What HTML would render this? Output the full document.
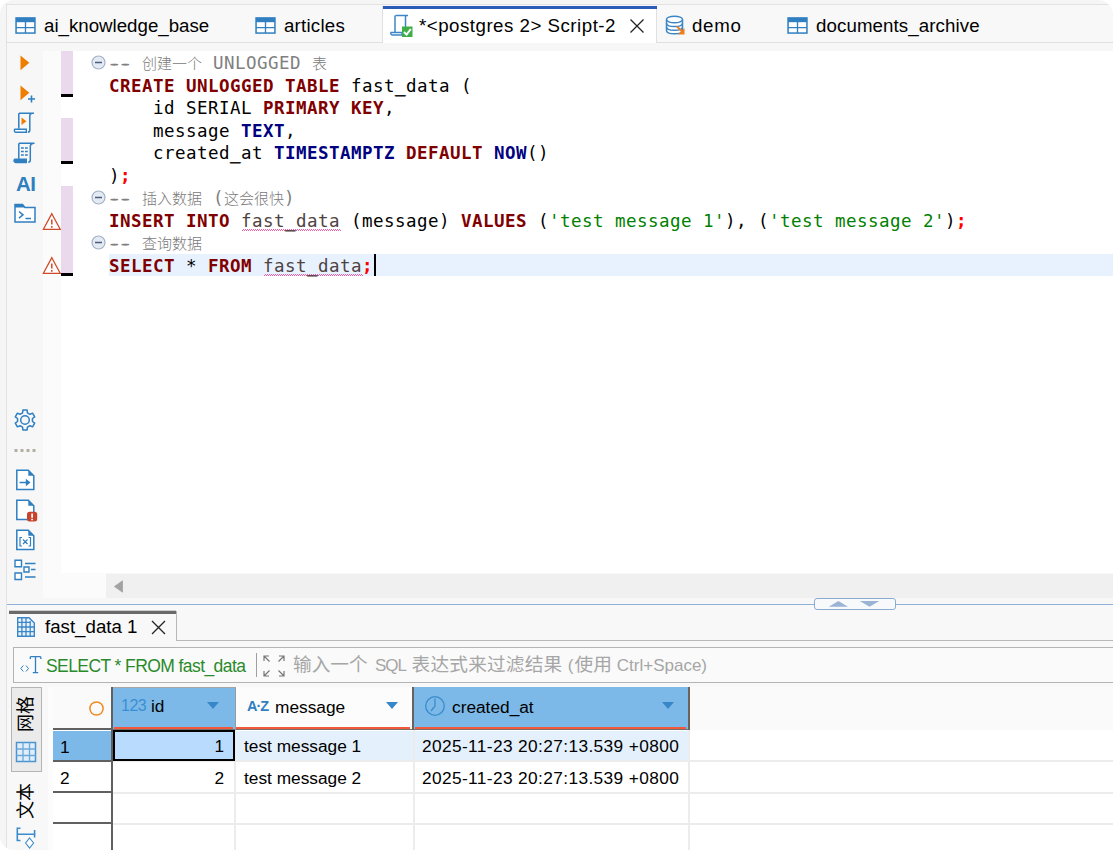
<!DOCTYPE html>
<html lang="zh">
<head>
<meta charset="utf-8">
<title>DBeaver - Script-2</title>
<style>
*{box-sizing:border-box;margin:0;padding:0}
html,body{width:1113px;height:850px;overflow:hidden;background:#fff}
body{position:relative;font-family:"Liberation Sans","Noto Sans CJK SC",sans-serif;color:#000}
.abs{position:absolute}
#frame{position:absolute;left:0;top:0;width:1113px;height:850px;background:#f5f5f5;border-radius:14px 15px 0 14px;overflow:hidden}
#win{position:absolute;left:6px;top:4px;width:1120px;height:860px;background:#f8f8f8;border-left:1px solid #e2e2e2;border-top:1px solid #e2e2e2}
/* tabs */
.tab{position:absolute;top:0;height:37px;font-size:18.7px;line-height:37px;white-space:nowrap;color:#000}
.tab .lbl{position:absolute;top:1px}
#tabline{position:absolute;left:7px;top:42px;width:1106px;height:1px;background:#e0e0e0}
#acttab{position:absolute;left:382px;top:6px;width:275px;height:37px;background:#fff;border-left:1px solid #e0e0e0;border-right:1px solid #e0e0e0}
#acttab:before{content:"";position:absolute;left:0;top:0;width:274px;height:3px;background:#2c5bb8}
/* editor */
#edwrap{position:absolute;left:7px;top:43px;width:1106px;height:561px;background:#f7f7f7}
#editor{position:absolute;left:61px;top:51px;width:1052px;height:522px;background:#fff}
#ruler{position:absolute;left:43px;top:51px;width:63px;height:547px;background:#fbfbfb}
.chg{position:absolute;left:61px;width:12px;background:#ead9ec}
.chgb{position:absolute;left:61px;width:12px;height:3px;background:#000}
#curline{position:absolute;left:109px;top:254px;width:1004px;height:22px;background:#e8f2fe}
.code{position:absolute;left:109px;height:22.5px;line-height:22.5px;font-family:"DejaVu Sans Mono","Liberation Mono","Noto Sans CJK SC",monospace;font-size:17.5px;letter-spacing:0.464px;white-space:pre;color:#000}
.k{color:#800000;font-weight:bold}
.t{color:#000080;font-weight:bold}
.s{color:#008000}
.sc{color:#ff0000;font-weight:bold}
.c{color:#808080}
.cj{font-family:"Liberation Sans","Noto Sans CJK SC",sans-serif;font-size:15px;letter-spacing:0;color:#7a7a7a;font-weight:300}
.id{color:#4f4242}
.us{text-shadow:0 1px 0 currentColor,0.5px 0 0 currentColor,-0.5px 0 0 currentColor}
.dsh{text-shadow:1.5px 0 0 currentColor,-1.5px 0 0 currentColor}
#hscroll{position:absolute;left:106px;top:574px;width:1007px;height:24px;background:#f0f0f0}
/* bottom */
#sash{position:absolute;left:7px;top:604px;width:1106px;height:1px;background:#8fb0d8}

#sashh{position:absolute;left:814px;top:598px;width:82px;height:12px;border:1px solid #8cabd2;border-radius:3px;background:#f8f9fa}
#rtab{position:absolute;left:9px;top:611px;width:168px;height:30px;background:#f8f8f8;border-right:1px solid #b8b8b8}
#rtab:before{content:"";position:absolute;left:0;top:0;width:167px;height:3px;background:#6a6a6a;box-shadow:0 -1px 0 #cfcfcf}
#rtabline{position:absolute;left:176px;top:640px;width:940px;height:1px;background:#b8b8b8}
#rtabtxt{position:absolute;left:45px;top:615px;font-size:18.700px;line-height:24px;white-space:nowrap}
#filter{position:absolute;left:13px;top:647px;width:1110px;height:36px;border:1px solid #b4b4b4;background:#fafafa}
#ftxt{position:absolute;left:46px;top:654px;font-size:17.500px;letter-spacing:-0.580px;line-height:24px;color:#2a8a2a;white-space:nowrap}
#fph{position:absolute;left:293px;top:651px;font-size:18.670px;line-height:28px;color:#a6a6a6;white-space:nowrap}
.fs{display:inline-block;vertical-align:baseline;white-space:nowrap}
.fl{font-size:17px}
#fsep{position:absolute;left:256px;top:653px;width:1px;height:24px;background:#a0a0a0}
#vtab1{position:absolute;left:11px;top:687px;width:31px;height:85px;background:#ebebeb;border:1px solid #b5b5b5}
.vtxt{position:absolute;font-size:18px;line-height:20px;white-space:nowrap;transform-origin:0 0;transform:rotate(-90deg);font-family:"Liberation Sans","Noto Sans CJK SC",sans-serif}
#grid{position:absolute;left:53px;top:687px;width:1060px;height:170px;background:#fff}
#ghead{position:absolute;left:53px;top:687px;width:1060px;height:43px;background:#fafafa}
.gh{position:absolute;top:687px;height:43px;font-size:17.300px;line-height:24px;white-space:nowrap}
.gh.sel{background:#7db9e8}
.gh .red{position:absolute;left:1px;right:2px;bottom:1px;height:2px;background:#f4583a}
.gh:after{content:"";position:absolute;left:0;right:0;bottom:0;height:1px;background:#77706a}
.gh .nm{position:absolute;top:8px}
.gh .tri{position:absolute;top:15px;width:0;height:0;border-left:6.5px solid transparent;border-right:6.5px solid transparent;border-top:7px solid #3787c8}
.hl{position:absolute;left:113px;height:2px;width:1000px;background:#ececec}
.vl{position:absolute;top:730px;width:2px;height:120px;background:#ececec}
.rhl{position:absolute;left:53px;width:59px;height:2px;background:#606060}
.cell{position:absolute;font-size:17.300px;line-height:24px;white-space:nowrap}
</style>
</head>
<body>
<div id="frame">
<div id="win"></div>

<!-- TAB BAR -->
<div id="tabline"></div>
<div id="acttab"></div>
<div id="tabs">
<svg class="abs" style="left:15px;top:17px" width="21" height="17" viewBox="0 0 22 18"><rect x="1" y="1" width="20" height="16" fill="#fff" stroke="#2f7fc1" stroke-width="1.6"/><rect x="1" y="1" width="20" height="4.5" fill="#2f7fc1"/><path d="M11 5v12M1 11.300h20" stroke="#2f7fc1" stroke-width="1.400" fill="none"/></svg>
<div class="tab" style="left:44px;top:6px"><span class="lbl" id="t1">ai_knowledge_base</span></div>
<svg class="abs" style="left:255px;top:17px" width="21" height="17" viewBox="0 0 22 18"><rect x="1" y="1" width="20" height="16" fill="#fff" stroke="#2f7fc1" stroke-width="1.6"/><rect x="1" y="1" width="20" height="4.5" fill="#2f7fc1"/><path d="M11 5v12M1 11.300h20" stroke="#2f7fc1" stroke-width="1.400" fill="none"/></svg>
<div class="tab" style="left:284px;top:6px"><span class="lbl" id="t2" style="letter-spacing:0.22px">articles</span></div>
<svg class="abs" style="left:389px;top:13px" width="26" height="26" viewBox="0 0 26 26"><path d="M6.5 2.5h12.5M6 2.5v17M16.5 2.5v12" stroke="#3c86c6" stroke-width="1.5" fill="none"/><path d="M2 19.5h11v2.5h-9.5a1.6 1.6 0 0 1-1.5-2.5z" fill="#fff" stroke="#3c86c6" stroke-width="1.4"/><rect x="13" y="13.500" width="10.500" height="10.500" fill="#3fae49"/><path d="M15 19l2.600 2.600 4.200-5.600" stroke="#fff" stroke-width="2" fill="none"/></svg>
<div class="tab" style="left:419px;top:6px"><span class="lbl" id="t3" style="letter-spacing:0.5px">*&lt;postgres 2&gt; Script-2</span></div>
<svg class="abs" style="left:629px;top:18px" width="16" height="16" viewBox="0 0 16 16"><path d="M1.500 1.500l13 13M14.500 1.500l-13 13" stroke="#222" stroke-width="1.300" fill="none"/></svg>
<svg class="abs" style="left:664px;top:14px" width="24" height="22" viewBox="0 0 24 22"><path d="M2.500 5.500v11c0 2 3.600 3.300 8 3.300s8-1.300 8-3.300v-11" fill="#fff" stroke="#3c86c6" stroke-width="1.500"/><ellipse cx="10.500" cy="5.500" rx="8" ry="3.300" fill="#fff" stroke="#3c86c6" stroke-width="1.500"/><path d="M2.500 9.200c0 2 3.600 3.300 8 3.300s8-1.300 8-3.300M2.500 13c0 2 3.600 3.300 8 3.300s8-1.300 8-3.300" fill="none" stroke="#3c86c6" stroke-width="1.500"/><path d="M13 12.500l5.500 5.500" stroke="#ef7d1a" stroke-width="1.800"/><path d="M20.500 14v6.500h-6.500z" fill="#ef7d1a"/></svg>
<div class="tab" style="left:692px;top:6px"><span class="lbl" id="t4" style="letter-spacing:0.7px">demo</span></div>
<svg class="abs" style="left:787px;top:17px" width="21" height="17" viewBox="0 0 22 18"><rect x="1" y="1" width="20" height="16" fill="#fff" stroke="#2f7fc1" stroke-width="1.6"/><rect x="1" y="1" width="20" height="4.5" fill="#2f7fc1"/><path d="M11 5v12M1 11.300h20" stroke="#2f7fc1" stroke-width="1.400" fill="none"/></svg>
<div class="tab" style="left:816px;top:6px"><span class="lbl" id="t5" style="letter-spacing:0.1px">documents_archive</span></div>
</div>

<!-- EDITOR -->
<div id="edwrap"></div>
<div id="ruler"></div>
<div id="editor"></div>
<div id="gutter">
<div class="chg" style="top:51px;height:43px"></div><div class="chgb" style="top:94px"></div>
<div class="chg" style="top:118px;height:43px"></div><div class="chgb" style="top:161px"></div>
<div class="chg" style="top:186px;height:87px"></div><div class="chgb" style="top:273px"></div>
</div>
<div id="curline"></div>
<div id="squig">
<svg class="abs" style="left:242px;top:229px" width="99" height="2" viewBox="0 0 99 2" shape-rendering="crispEdges"><path d="M0 1h1v1h-1zM1 0h1v1h-1zM2 1h1v1h-1zM3 0h1v1h-1zM4 1h1v1h-1zM5 0h1v1h-1zM6 1h1v1h-1zM7 0h1v1h-1zM8 1h1v1h-1zM9 0h1v1h-1zM10 1h1v1h-1zM11 0h1v1h-1zM12 1h1v1h-1zM13 0h1v1h-1zM14 1h1v1h-1zM15 0h1v1h-1zM16 1h1v1h-1zM17 0h1v1h-1zM18 1h1v1h-1zM19 0h1v1h-1zM20 1h1v1h-1zM21 0h1v1h-1zM22 1h1v1h-1zM23 0h1v1h-1zM24 1h1v1h-1zM25 0h1v1h-1zM26 1h1v1h-1zM27 0h1v1h-1zM28 1h1v1h-1zM29 0h1v1h-1zM30 1h1v1h-1zM31 0h1v1h-1zM32 1h1v1h-1zM33 0h1v1h-1zM34 1h1v1h-1zM35 0h1v1h-1zM36 1h1v1h-1zM37 0h1v1h-1zM38 1h1v1h-1zM39 0h1v1h-1zM40 1h1v1h-1zM41 0h1v1h-1zM42 1h1v1h-1zM43 0h1v1h-1zM44 1h1v1h-1zM45 0h1v1h-1zM46 1h1v1h-1zM47 0h1v1h-1zM48 1h1v1h-1zM49 0h1v1h-1zM50 1h1v1h-1zM51 0h1v1h-1zM52 1h1v1h-1zM53 0h1v1h-1zM54 1h1v1h-1zM55 0h1v1h-1zM56 1h1v1h-1zM57 0h1v1h-1zM58 1h1v1h-1zM59 0h1v1h-1zM60 1h1v1h-1zM61 0h1v1h-1zM62 1h1v1h-1zM63 0h1v1h-1zM64 1h1v1h-1zM65 0h1v1h-1zM66 1h1v1h-1zM67 0h1v1h-1zM68 1h1v1h-1zM69 0h1v1h-1zM70 1h1v1h-1zM71 0h1v1h-1zM72 1h1v1h-1zM73 0h1v1h-1zM74 1h1v1h-1zM75 0h1v1h-1zM76 1h1v1h-1zM77 0h1v1h-1zM78 1h1v1h-1zM79 0h1v1h-1zM80 1h1v1h-1zM81 0h1v1h-1zM82 1h1v1h-1zM83 0h1v1h-1zM84 1h1v1h-1zM85 0h1v1h-1zM86 1h1v1h-1zM87 0h1v1h-1zM88 1h1v1h-1zM89 0h1v1h-1zM90 1h1v1h-1zM91 0h1v1h-1zM92 1h1v1h-1zM93 0h1v1h-1zM94 1h1v1h-1zM95 0h1v1h-1zM96 1h1v1h-1zM97 0h1v1h-1zM98 1h1v1h-1z" fill="#f25aa8"/></svg>
<svg class="abs" style="left:264px;top:274px" width="99" height="2" viewBox="0 0 99 2" shape-rendering="crispEdges"><path d="M0 1h1v1h-1zM1 0h1v1h-1zM2 1h1v1h-1zM3 0h1v1h-1zM4 1h1v1h-1zM5 0h1v1h-1zM6 1h1v1h-1zM7 0h1v1h-1zM8 1h1v1h-1zM9 0h1v1h-1zM10 1h1v1h-1zM11 0h1v1h-1zM12 1h1v1h-1zM13 0h1v1h-1zM14 1h1v1h-1zM15 0h1v1h-1zM16 1h1v1h-1zM17 0h1v1h-1zM18 1h1v1h-1zM19 0h1v1h-1zM20 1h1v1h-1zM21 0h1v1h-1zM22 1h1v1h-1zM23 0h1v1h-1zM24 1h1v1h-1zM25 0h1v1h-1zM26 1h1v1h-1zM27 0h1v1h-1zM28 1h1v1h-1zM29 0h1v1h-1zM30 1h1v1h-1zM31 0h1v1h-1zM32 1h1v1h-1zM33 0h1v1h-1zM34 1h1v1h-1zM35 0h1v1h-1zM36 1h1v1h-1zM37 0h1v1h-1zM38 1h1v1h-1zM39 0h1v1h-1zM40 1h1v1h-1zM41 0h1v1h-1zM42 1h1v1h-1zM43 0h1v1h-1zM44 1h1v1h-1zM45 0h1v1h-1zM46 1h1v1h-1zM47 0h1v1h-1zM48 1h1v1h-1zM49 0h1v1h-1zM50 1h1v1h-1zM51 0h1v1h-1zM52 1h1v1h-1zM53 0h1v1h-1zM54 1h1v1h-1zM55 0h1v1h-1zM56 1h1v1h-1zM57 0h1v1h-1zM58 1h1v1h-1zM59 0h1v1h-1zM60 1h1v1h-1zM61 0h1v1h-1zM62 1h1v1h-1zM63 0h1v1h-1zM64 1h1v1h-1zM65 0h1v1h-1zM66 1h1v1h-1zM67 0h1v1h-1zM68 1h1v1h-1zM69 0h1v1h-1zM70 1h1v1h-1zM71 0h1v1h-1zM72 1h1v1h-1zM73 0h1v1h-1zM74 1h1v1h-1zM75 0h1v1h-1zM76 1h1v1h-1zM77 0h1v1h-1zM78 1h1v1h-1zM79 0h1v1h-1zM80 1h1v1h-1zM81 0h1v1h-1zM82 1h1v1h-1zM83 0h1v1h-1zM84 1h1v1h-1zM85 0h1v1h-1zM86 1h1v1h-1zM87 0h1v1h-1zM88 1h1v1h-1zM89 0h1v1h-1zM90 1h1v1h-1zM91 0h1v1h-1zM92 1h1v1h-1zM93 0h1v1h-1zM94 1h1v1h-1zM95 0h1v1h-1zM96 1h1v1h-1zM97 0h1v1h-1zM98 1h1v1h-1z" fill="#f25aa8"/></svg>
</div>
<div id="codelines">
<div class="code" id="L0" style="top:52.0px"><span class="c"><span class="dsh">--</span> <span class="cj">创建一个</span> UNLOGGED <span class="cj">表</span></span></div>
<div class="code" id="L1" style="top:74.5px"><span class="k">CREATE UNLOGGED TABLE</span> fast<span class="us">_</span>data (</div>
<div class="code" id="L2" style="top:97.0px">    id SERIAL <span class="k">PRIMARY KEY</span>,</div>
<div class="code" id="L3" style="top:119.5px">    message <span class="t">TEXT</span>,</div>
<div class="code" id="L4" style="top:142.0px">    created<span class="us">_</span>at <span class="t">TIMESTAMPTZ</span> <span class="k">DEFAULT</span> <span class="t">NOW</span>()</div>
<div class="code" id="L5" style="top:164.5px">)<span class="sc">;</span></div>
<div class="code" id="L6" style="top:187.0px"><span class="c"><span class="dsh">--</span> <span class="cj">插入数据</span> (<span class="cj">这会很快</span>)</span></div>
<div class="code" id="L7" style="top:209.5px"><span class="k">INSERT INTO</span> <span class="id">fast<span class="us">_</span>data</span> (message) <span class="k">VALUES</span> (<span class="s">'test message 1'</span>), (<span class="s">'test message 2'</span>)<span class="sc">;</span></div>
<div class="code" id="L8" style="top:232.0px"><span class="c"><span class="dsh">--</span> <span class="cj">查询数据</span></span></div>
<div class="code" id="L9" style="top:254.5px"><span class="k">SELECT</span> * <span class="k">FROM</span> <span class="id">fast<span class="us">_</span>data</span><span class="sc">;</span></div>
</div>
<div id="hscroll"></div>
<div id="marks">
<svg class="abs" style="left:91px;top:54.8px" width="15" height="15" viewBox="0 0 15 15"><circle cx="7.500" cy="7.500" r="6.500" fill="#e3eaf3" stroke="#a3b1c7" stroke-width="1.200"/><path d="M4 7.500h7" stroke="#4b5c7c" stroke-width="1.600"/></svg>
<svg class="abs" style="left:91px;top:189.8px" width="15" height="15" viewBox="0 0 15 15"><circle cx="7.500" cy="7.500" r="6.500" fill="#e3eaf3" stroke="#a3b1c7" stroke-width="1.200"/><path d="M4 7.500h7" stroke="#4b5c7c" stroke-width="1.600"/></svg>
<svg class="abs" style="left:91px;top:234.7px" width="15" height="15" viewBox="0 0 15 15"><circle cx="7.500" cy="7.500" r="6.500" fill="#e3eaf3" stroke="#a3b1c7" stroke-width="1.200"/><path d="M4 7.500h7" stroke="#4b5c7c" stroke-width="1.600"/></svg>
<svg class="abs" style="left:42px;top:211.5px" width="20" height="19" viewBox="0 0 20 19"><path d="M9.800 1.700L18.200 17.300H1.400z" fill="#fff" stroke="#d04a27" stroke-width="1.300" stroke-linejoin="miter"/><path d="M9.800 7.500v5M9.800 14v1.800" stroke="#d04a27" stroke-width="1.500"/></svg>
<svg class="abs" style="left:42px;top:256.3px" width="20" height="19" viewBox="0 0 20 19"><path d="M9.800 1.700L18.200 17.300H1.400z" fill="#fff" stroke="#d04a27" stroke-width="1.300" stroke-linejoin="miter"/><path d="M9.800 7.500v5M9.800 14v1.800" stroke="#d04a27" stroke-width="1.500"/></svg>
<div class="abs" style="left:374px;top:254px;width:2px;height:22px;background:#000"></div>
<svg class="abs" style="left:114px;top:580px" width="10" height="13" viewBox="0 0 10 13"><path d="M8.500 0.800L0.500 6.500l8 5.700z" fill="#a3a3a3" stroke="#a3a3a3" stroke-width="0.800" stroke-linejoin="round"/></svg>
</div>

<!-- LEFT TOOLBAR -->
<div id="ltool">
<svg class="abs" style="left:20px;top:55px" width="10" height="16" viewBox="0 0 10 16"><path d="M0.500 0.500L9.300 7.800L0.500 15.200z" fill="#ef7d00"/></svg>
<svg class="abs" style="left:20px;top:85px" width="17" height="20" viewBox="0 0 17 20"><path d="M0.500 0.500L9.300 7.800L0.500 15.200z" fill="#ef7d00"/><path d="M11.500 10.500v7M8 14h7" stroke="#2f7fc1" stroke-width="1.600" fill="none"/></svg>
<svg class="abs" style="left:13px;top:111px" width="24" height="24" viewBox="0 0 24 24"><path d="M6 2.300h15M5.800 2.300v15.500M18.800 2.300c-1.500 0.300-2 1.500-2 3v13.500c0 1.500-0.800 2.500-2 2.500" stroke="#2f7fc1" stroke-width="1.500" fill="none"/><path d="M1.800 18.300h11.500v3h-10a1.800 1.800 0 0 1-1.500-3z" fill="#fff" stroke="#2f7fc1" stroke-width="1.400"/><path d="M8.500 6.500l5 3.800-5 3.800z" fill="#ef7d00"/></svg>
<svg class="abs" style="left:13px;top:141px" width="24" height="24" viewBox="0 0 24 24"><path d="M6 2.300h15.500M5.800 2.300v15.500M20.500 2.300c-2.500 0.300-3.200 1.500-3.200 3v13.500c0 1.500-0.800 2.500-2 2.500" stroke="#2f7fc1" stroke-width="1.500" fill="none"/><path d="M1.800 18.300h11.500v3.200h-10a1.800 1.800 0 0 1-1.500-3.200z" fill="#2f7fc1" stroke="#2f7fc1" stroke-width="1.400"/><path d="M8 7h2.800M12 7h2.800M8 10.500h2.800M12 10.500h2.800M8 14h2.800M12 14h2.800" stroke="#2f7fc1" stroke-width="1.500" fill="none"/></svg>
<div class="abs" id="ai" style="left:16px;top:173px;font-size:20.500px;line-height:22px;font-weight:bold;color:#2f7fc1;letter-spacing:-0.500px">AI</div>
<svg class="abs" style="left:13px;top:202px" width="24" height="22" viewBox="0 0 24 22"><path d="M2 2.500h7.500l2.500 3h10v14.500h-20z" fill="#fff" stroke="#2f7fc1" stroke-width="1.500"/><path d="M2 2.500h7.500l2.500 3h-10z" fill="#2f7fc1"/><path d="M6 9.500l4 3.300-4 3.300M12.500 16.500h5.500" stroke="#2f7fc1" stroke-width="1.500" fill="none"/></svg>
<svg class="abs" style="left:13px;top:408px" width="24" height="24" viewBox="0 0 24 24"><path d="M9.58 4.80 L9.88 2.02 L14.12 2.02 L14.42 4.80 L17.03 6.30 L19.58 5.17 L21.70 8.85 L19.45 10.50 L19.45 13.50 L21.70 15.15 L19.58 18.83 L17.03 17.70 L14.42 19.20 L14.12 21.98 L9.88 21.98 L9.58 19.20 L6.97 17.70 L4.42 18.83 L2.30 15.15 L4.55 13.50 L4.55 10.50 L2.30 8.85 L4.42 5.17 L6.97 6.30Z" fill="none" stroke="#2f7fc1" stroke-width="1.500" stroke-linejoin="round"/><circle cx="12" cy="12" r="4.300" fill="none" stroke="#2f7fc1" stroke-width="1.500"/></svg>
<svg class="abs" style="left:14px;top:449px" width="22" height="3" viewBox="0 0 22 3"><path d="M0.500 0h3v3h-3zM6.500 0h3v3h-3zM12.500 0h3v3h-3zM18.500 0h3v3h-3z" fill="#b3afa4"/></svg>
<svg class="abs" style="left:15px;top:468px" width="22" height="24" viewBox="0 0 22 24"><path d="M1.800 2.200h11.500l5.500 5.500v13.800h-17z" fill="#fff" stroke="#2f7fc1" stroke-width="1.500"/><path d="M13.300 2.200l5.500 5.500h-5.500z" fill="#2f7fc1"/><path d="M4.500 14.500h7" stroke="#2f7fc1" stroke-width="1.500" fill="none"/><path d="M10.800 10.800l4.700 3.700-4.700 3.700z" fill="#2f7fc1"/></svg>
<svg class="abs" style="left:15px;top:498px" width="24" height="25" viewBox="0 0 24 25"><path d="M1.800 2.200h11.500l5.500 5.500v13.800h-17z" fill="#fff" stroke="#2f7fc1" stroke-width="1.500"/><path d="M13.300 2.200l5.500 5.500h-5.500z" fill="#2f7fc1"/><rect x="12" y="13.800" width="10.200" height="9.800" rx="2.500" fill="#c8432b"/><path d="M17.100 15.500v4.300M17.100 20.800v1.500" stroke="#fff" stroke-width="1.700"/></svg>
<svg class="abs" style="left:15px;top:528px" width="22" height="24" viewBox="0 0 22 24"><path d="M1.800 2.200h11.500l5.500 5.500v13.800h-17z" fill="#fff" stroke="#2f7fc1" stroke-width="1.500"/><path d="M13.300 2.200l5.500 5.500h-5.500z" fill="#2f7fc1"/><path d="M7 9.500h-2v8.500h2M13.500 9.500h2v8.500h-2M8 11.500l4.500 4.500M12.500 11.500l-4.500 4.500" stroke="#2f7fc1" stroke-width="1.200" fill="none"/></svg>
<svg class="abs" style="left:13px;top:558px" width="24" height="24" viewBox="0 0 24 24"><path d="M2 2.300h6.500v6.500h-6.500zM11 9h5v5h-5zM2 15h6.500v6.500h-6.500z" fill="#fff" stroke="#2f7fc1" stroke-width="1.400"/><path d="M12 5.500h10.500M18 11.500h4.500M12 19h10.500" stroke="#2f7fc1" stroke-width="1.500" fill="none"/></svg>
</div>

<!-- BOTTOM PANEL -->
<div id="sash"></div>
<div id="bottom">
<div id="sashh"></div>
<svg class="abs" style="left:814px;top:598px" width="82" height="12" viewBox="0 0 82 12"><path d="M14.800 8.800l9.600-5.900 9.600 5.900zM45.800 2.900l9.700 5.900 9.800-5.900z" fill="#9bb4d6"/></svg>
<div id="rtab"></div>
<div id="rtabline"></div>
<svg class="abs" style="left:16px;top:616px" width="20" height="22" viewBox="0 0 20 22"><path d="M1.700 1.700h11.300l5.300 5.300v13.300h-16.600z" fill="#eaf3fb" stroke="#3a86c8" stroke-width="1.400"/><path d="M1.700 6.400h12.500M1.700 11h16.600M1.700 15.600h16.600M5.900 1.700v18.600M10 1.700v18.600M14.200 5v15.300" stroke="#3a86c8" stroke-width="1.300" fill="none"/></svg>
<div id="rtabtxt">fast_data 1</div>
<svg class="abs" style="left:151px;top:620px" width="15" height="15" viewBox="0 0 15 15"><path d="M1 1l13 13M14 1l-13 13" stroke="#222" stroke-width="1.300" fill="none"/></svg>

<div id="filter"></div>
<svg class="abs" style="left:20px;top:654px" width="22" height="22" viewBox="0 0 22 22"><path d="M10.300 2.700h10.500M15.500 2.700v16M12.800 18.700h5.400M10.300 2.700v2.300M20.800 2.700v2.300" stroke="#2f7fc1" stroke-width="1.300" fill="none"/><path d="M3.300 11.500l-2.500 3 2.500 3M6 11.500l2.500 3-2.500 3" stroke="#2f7fc1" stroke-width="1" fill="none"/></svg>
<div id="ftxt">SELECT * FROM fast_data</div>
<div id="fsep"></div>
<svg class="abs" style="left:263px;top:655px" width="22" height="22" viewBox="0 0 22 22"><path d="M1 6v-5h5M1 1l5.500 5.500M16 1h5v5M21 1l-5.500 5.500M1 16v5h5M1 21l5.500-5.500M21 16v5h-5M21 21l-5.500-5.500" stroke="#777" stroke-width="1.200" fill="none"/></svg>
<div id="fph"><span class="fs" style="width:81.900px">输入一个</span><span class="fs fl" style="width:36.700px;letter-spacing:-1px">SQL</span><span class="fs" style="width:156.100px;letter-spacing:0.200px">表达式来过滤结果</span><span class="fs fl" style="width:6.800px">(</span><span class="fs" style="width:42.300px">使用</span><span class="fs fl" id="fl6">Ctrl+Space)</span></div>

<div id="vtab1"></div>
<div class="vtxt" id="v1" style="left:16px;top:732px">网格</div>
<svg class="abs" style="left:15px;top:741px" width="22" height="22" viewBox="0 0 22 22"><rect x="1.500" y="1.500" width="19" height="19" fill="#e1eefa" stroke="#4a95d0" stroke-width="1.500"/><path d="M1.500 8h19M1.500 14.500h19M8 1.500v19M14.500 1.500v19" stroke="#6aa8da" stroke-width="1.300" fill="none"/></svg>
<div class="vtxt" id="v2" style="left:16px;top:819px">文本</div>
<svg class="abs" style="left:15px;top:827px" width="22" height="23" viewBox="0 0 22 23"><path d="M5.500 1.200h-3.200v12.300h3.200M2.300 7.300h17.300M19.600 3v7.500" stroke="#3a8ccc" stroke-width="1.600" fill="none"/><path d="M14.600 11l4 5-4 5-4-5z" fill="#fff" stroke="#3a8ccc" stroke-width="1.100"/></svg>

<div class="abs" style="left:48px;top:687px;width:5px;height:170px;background:#fcfcfc"></div>
<div id="grid"></div>
<div id="ghead"></div>
<svg class="abs" style="left:88px;top:700px" width="17" height="17" viewBox="0 0 17 17"><circle cx="8.500" cy="8.500" r="6.600" fill="none" stroke="#f08a24" stroke-width="1.500"/></svg>
<div class="gh sel" style="left:113px;width:123px;border-right:1px solid #9a9a9a;border-top:1px solid #a5a5a5"><div class="red"></div><span class="nm" style="left:8px;top:6px;color:#3a8fd4;font-size:16px;letter-spacing:-0.500px">123</span><span class="nm" style="left:38px;top:6px">id</span><div class="tri" style="left:94px;top:14px"></div></div>
<div class="gh" style="left:236px;width:178px;background:#fcfcfc;border-right:2px solid #6a625c"><div class="red" style="left:0"></div><span class="nm" id="az" style="left:11px;top:7px;color:#2f7fc1;font-size:14.500px;font-weight:bold;letter-spacing:-1px">A·Z</span><span class="nm" style="left:39px">message</span><div class="tri" style="left:150px"></div></div>
<div class="gh sel" style="left:414px;width:276px;border-right:2px solid #6a625c"><div class="red"></div><svg class="abs" style="left:10px;top:8px" width="22" height="22" viewBox="0 0 22 22"><circle cx="11" cy="11" r="9.300" fill="none" stroke="#3a8ccc" stroke-width="1.300"/><path d="M11 3.500v7.500l-4 5" stroke="#3a8ccc" stroke-width="1.300" fill="none"/></svg><span class="nm" style="left:38px">created_at</span><div class="tri" style="left:248px"></div></div>

<!-- rows -->
<div class="abs" style="left:53px;top:731px;width:59px;height:29px;background:#7db9e8"></div>
<div class="abs" style="left:235px;top:731px;width:453px;height:29px;background:#e4f0fc"></div>
<div class="hl" style="top:760px"></div><div class="hl" style="top:792px"></div><div class="hl" style="top:823px"></div>
<div class="vl" style="left:234px"></div><div class="vl" style="left:413px"></div><div class="vl" style="left:688px"></div>
<div class="abs" style="left:111px;top:687px;width:2px;height:170px;background:#606060"></div>
<div class="rhl" style="top:728px"></div><div class="rhl" style="top:760px"></div><div class="rhl" style="top:791px"></div><div class="rhl" style="top:822px"></div>
<div class="abs" style="left:113px;top:730px;width:122px;height:31px;background:#b9dcfe;border:2px solid #000"></div>
<div class="cell" style="left:60px;top:735px">1</div>
<div class="cell" style="left:60px;top:766px">2</div>
<div class="cell" style="left:113px;top:734px;width:111px;text-align:right">1</div>
<div class="cell" style="left:113px;top:766px;width:111px;text-align:right">2</div>
<div class="cell" id="m1" style="left:244px;top:734px">test message 1</div>
<div class="cell" id="m2" style="left:244px;top:766px">test message 2</div>
<div class="cell" id="d1" style="left:422px;top:734px;letter-spacing:0.38px">2025-11-23 20:27:13.539 +0800</div>
<div class="cell" id="d2" style="left:422px;top:766px;letter-spacing:0.38px">2025-11-23 20:27:13.539 +0800</div>
</div>
</div>
</body>
</html>
